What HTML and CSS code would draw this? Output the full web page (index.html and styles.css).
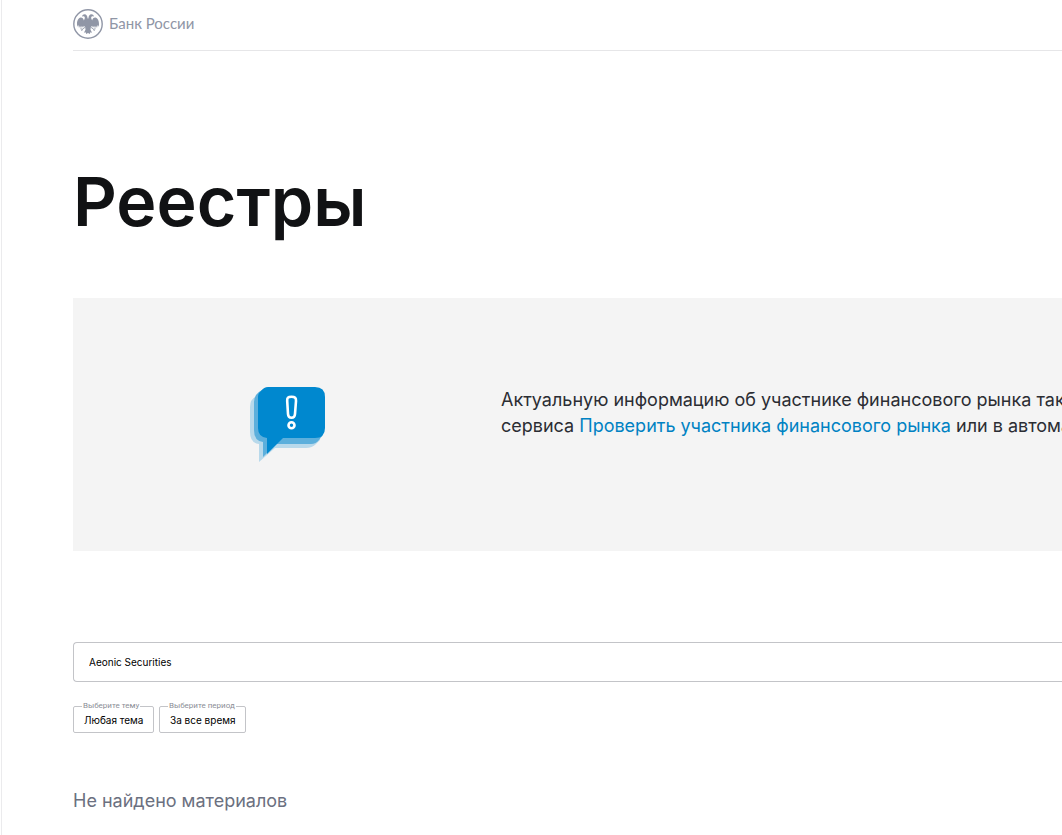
FILE: index.html
```html
<!DOCTYPE html>
<html lang="ru">
<head>
    <meta charset="UTF-8">
    <meta name="viewport" content="width=device-width, initial-scale=1.0">
    <title>Реестры | Банк России</title>
    <link rel="stylesheet" href="styles.css">
</head>
<body>
    <div class="page">
        <header class="header">
            <a class="logo" href="#">
                <svg class="logo-icon" viewBox="0 0 30 30" aria-hidden="true">
                    <circle cx="15" cy="15" r="14.2" fill="none" stroke="currentColor" stroke-width="1.4"/>
                    <g fill="currentColor">
                        <path d="M14.6 9.5C14.5 7 13.4 5.2 11.6 5.2C10.3 5.2 9.4 6 9 7.4L10.6 7.2C11.7 7.5 12 8.4 11.7 9.6L10.9 11.5C10.5 9.4 9.2 8.4 7.7 8.5C5.3 8.9 3.9 11.7 4 15.4L4.6 17.8L5.4 16.1L6 19L7 16.7L8 19.3L8.9 16.8L10 18.7L10.9 16.7L12.2 18.2L12.5 20.8L10.9 23.7L12.6 23.2L13.3 25.1L15 23.9L16.7 25.1L17.4 23.2L19.1 23.7L17.5 20.8L17.8 18.2L19.1 16.7L20 18.7L21.1 16.8L22 19.3L23 16.7L24 19L24.6 16.1L25.4 17.8L26 15.4C26.1 11.7 24.7 8.9 22.3 8.5C20.8 8.4 19.5 9.4 19.1 11.5L18.3 9.6C18 8.4 18.3 7.5 19.4 7.2L21 7.4C20.6 6 19.7 5.2 18.4 5.2C16.6 5.2 15.5 7 15.4 9.5Z"/>
                    </g>
                    <path d="M12 18.4L9.4 20.2L7.4 19.8M9.4 20.2L8.6 22M18 18.4L20.6 20.2L22.6 19.8M20.6 20.2L21.4 22" fill="none" stroke="currentColor" stroke-width=".9"/>
                </svg>
                <span class="logo-text">Банк России</span>
            </a>
        </header>

        <main>
            <h1 class="title">Реестры</h1>

            <section class="notice">
                <div class="notice-picture">
                    <svg class="notice-icon" viewBox="0 0 76 76" aria-hidden="true">
                        <path d="M12 8Q0 9 0 20V45Q0 56 9 57V75L25 61H56Q62 61 66 57L70 53V8Z" fill="#b8d9eb"/>
                        <path d="M12 3Q4 7 4 15V43Q4 54 13 55V70L26 57H61Q66 57 69 53L72 49V3Z" fill="#5cafdc"/>
                        <path d="M18 0H65Q75 0 75 10V41Q75 51 65 51H33L17 67V51Q8 50 8 41V10Q8 6 11 4Q14 0 18 0Z" fill="#0088cf"/>
                        <path d="M41.5 9.7C38 9.7 37 11 37.2 14L38 27Q38.2 30.8 41.5 30.8Q44.8 30.8 45 27L46 14C46.2 11 45 9.7 41.5 9.7Z" fill="none" stroke="#fff" stroke-width="2.6"/>
                        <circle cx="41.5" cy="38.3" r="3" fill="none" stroke="#fff" stroke-width="2.6"/>
                    </svg>
                </div>
                <p class="notice-text">
                    Актуальную информацию об участнике финансового рынка такж<br>
                    сервиса <a href="#">Проверить участника финансового рынка</a> или в автомат
                </p>
            </section>

            <form class="search">
                <input class="search-input" type="text" value="Aeonic Securities" aria-label="Поиск">
                <div class="filters">
                    <fieldset class="filter">
                        <legend><label for="topic">Выберите тему</label></legend>
                        <select id="topic">
                            <option>Любая тема</option>
                        </select>
                    </fieldset>
                    <fieldset class="filter">
                        <legend><label for="period">Выберите период</label></legend>
                        <select id="period">
                            <option>За все время</option>
                        </select>
                    </fieldset>
                </div>
            </form>

            <p class="empty">Не найдено материалов</p>
        </main>
    </div>
</body>
</html>
```
FILE: styles.css
```css
* {
    margin: 0;
    padding: 0;
    box-sizing: border-box;
}

body {
    background-color: #fff;
    color: #2b2d33;
    font-family: Inter, Roboto, sans-serif;
    font-size: 18px;
    line-height: 26px;
}

.page {
    min-height: 100vh;
    margin-left: 1px;
    padding-left: 71px;
    border-left: 1px solid #ebebed;
    overflow: hidden;
}

.header {
    padding: 9px 0 11px;
    border-bottom: 1px solid #e6e6e8;
}

.logo {
    display: inline-flex;
    align-items: center;
    gap: 6px;
    height: 30px;
    color: #9096a6;
    text-decoration: none;
    vertical-align: top;
}

.logo-icon {
    width: 30px;
    height: 30px;
}

.logo-text {
    padding-bottom: 2px;
    font-family: Lato, sans-serif;
    font-size: 15px;
    line-height: 20px;
}

.title {
    margin-top: 110px;
    color: #111214;
    font-size: 68px;
    font-weight: 600;
    line-height: 80px;
}

.notice {
    display: flex;
    align-items: center;
    margin-top: 57px;
    min-height: 253px;
    background-color: #f4f4f4;
}

.notice-picture {
    display: flex;
    flex: none;
    justify-content: center;
    width: 428px;
    padding-left: 2px;
}

.notice-icon {
    width: 76px;
    height: 76px;
}

.notice-text {
    padding-bottom: 24px;
    white-space: nowrap;
}

.notice-text a {
    color: #0082c3;
    text-decoration: none;
}

.search {
    margin-top: 91px;
}

.search-input {
    display: block;
    width: 100%;
    height: 40px;
    padding: 0 15px;
    border: 1px solid #c3c4c8;
    border-right: 0;
    border-radius: 4px 0 0 4px;
    background-color: #fff;
    color: #000;
    font-family: inherit;
    font-size: 10px;
    outline: none;
}

.filters {
    display: flex;
    gap: 5px;
    margin-top: 18px;
}

.filter {
    min-width: 0;
    padding: 0 9px 4px 10px;
    border: 1px solid #c3c4c8;
    border-radius: 2px;
}

.filter legend {
    height: 12px;
    margin-left: -2px;
    padding: 0 1px;
    color: #8b8e96;
    font-family: Roboto, sans-serif;
    font-size: 8px;
    line-height: 12px;
}

.filter label {
    display: block;
}

.filter select {
    display: block;
    height: 16px;
    border: 0;
    background: none;
    color: #000;
    font-family: inherit;
    font-size: 10px;
    appearance: none;
    cursor: pointer;
}

.empty {
    margin-top: 55px;
    color: #6b7080;
}
```
